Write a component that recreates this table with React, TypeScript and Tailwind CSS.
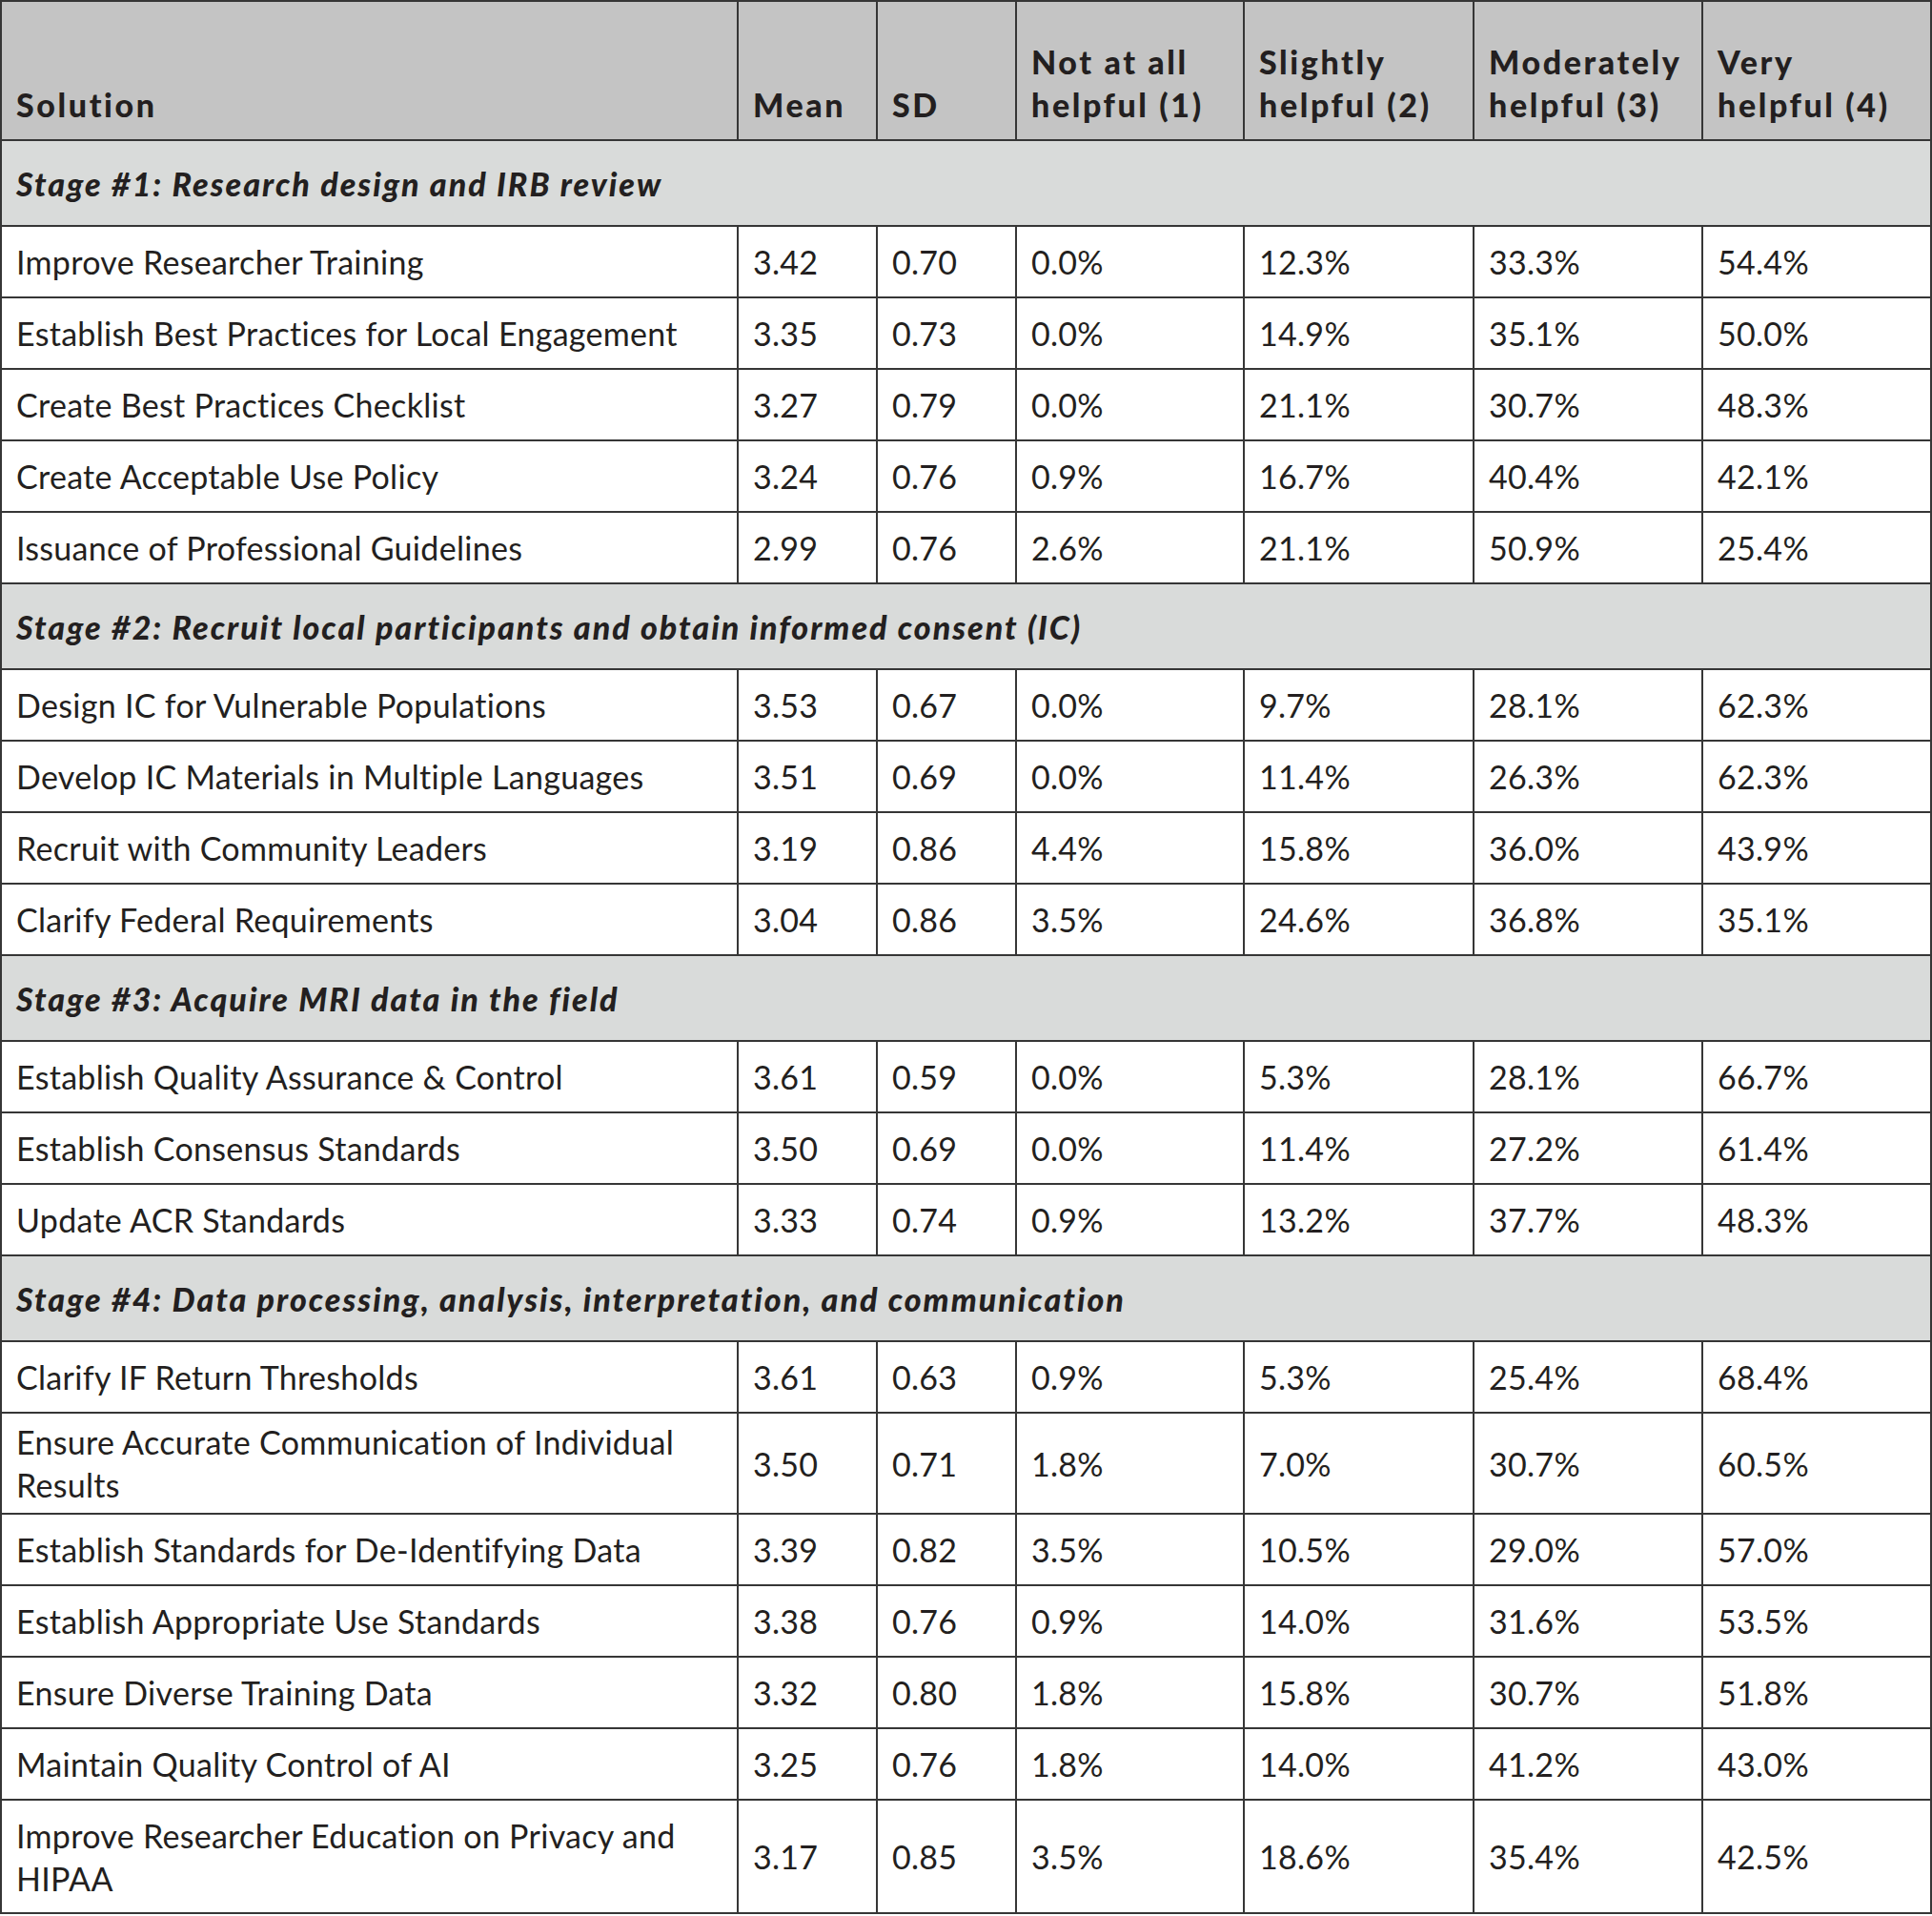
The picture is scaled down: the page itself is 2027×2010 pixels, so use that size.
import React from "react";

type Row = { name: string[]; v: string[]; h: string };
type Section = { title: string; rows: Row[] };

const R = "h-[73px]";
const R2 = "h-[104px]";
const R3 = "h-[117px]";

const sections: Section[] = [
  {
    title: "Stage #1: Research design and IRB review",
    rows: [
      { name: ["Improve Researcher Training"], v: ["3.42", "0.70", "0.0%", "12.3%", "33.3%", "54.4%"], h: R },
      { name: ["Establish Best Practices for Local Engagement"], v: ["3.35", "0.73", "0.0%", "14.9%", "35.1%", "50.0%"], h: R },
      { name: ["Create Best Practices Checklist"], v: ["3.27", "0.79", "0.0%", "21.1%", "30.7%", "48.3%"], h: R },
      { name: ["Create Acceptable Use Policy"], v: ["3.24", "0.76", "0.9%", "16.7%", "40.4%", "42.1%"], h: R },
      { name: ["Issuance of Professional Guidelines"], v: ["2.99", "0.76", "2.6%", "21.1%", "50.9%", "25.4%"], h: R },
    ],
  },
  {
    title: "Stage #2: Recruit local participants and obtain informed consent (IC)",
    rows: [
      { name: ["Design IC for Vulnerable Populations"], v: ["3.53", "0.67", "0.0%", "9.7%", "28.1%", "62.3%"], h: R },
      { name: ["Develop IC Materials in Multiple Languages"], v: ["3.51", "0.69", "0.0%", "11.4%", "26.3%", "62.3%"], h: R },
      { name: ["Recruit with Community Leaders"], v: ["3.19", "0.86", "4.4%", "15.8%", "36.0%", "43.9%"], h: R },
      { name: ["Clarify Federal Requirements"], v: ["3.04", "0.86", "3.5%", "24.6%", "36.8%", "35.1%"], h: R },
    ],
  },
  {
    title: "Stage #3: Acquire MRI data in the field",
    rows: [
      { name: ["Establish Quality Assurance & Control"], v: ["3.61", "0.59", "0.0%", "5.3%", "28.1%", "66.7%"], h: R },
      { name: ["Establish Consensus Standards"], v: ["3.50", "0.69", "0.0%", "11.4%", "27.2%", "61.4%"], h: R },
      { name: ["Update ACR Standards"], v: ["3.33", "0.74", "0.9%", "13.2%", "37.7%", "48.3%"], h: R },
    ],
  },
  {
    title: "Stage #4: Data processing, analysis, interpretation, and communication",
    rows: [
      { name: ["Clarify IF Return Thresholds"], v: ["3.61", "0.63", "0.9%", "5.3%", "25.4%", "68.4%"], h: R },
      { name: ["Ensure Accurate Communication of Individual", "Results"], v: ["3.50", "0.71", "1.8%", "7.0%", "30.7%", "60.5%"], h: R2 },
      { name: ["Establish Standards for De-Identifying Data"], v: ["3.39", "0.82", "3.5%", "10.5%", "29.0%", "57.0%"], h: R },
      { name: ["Establish Appropriate Use Standards"], v: ["3.38", "0.76", "0.9%", "14.0%", "31.6%", "53.5%"], h: R },
      { name: ["Ensure Diverse Training Data"], v: ["3.32", "0.80", "1.8%", "15.8%", "30.7%", "51.8%"], h: R },
      { name: ["Maintain Quality Control of AI"], v: ["3.25", "0.76", "1.8%", "14.0%", "41.2%", "43.0%"], h: R },
      { name: ["Improve Researcher Education on Privacy and", "HIPAA"], v: ["3.17", "0.85", "3.5%", "18.6%", "35.4%", "42.5%"], h: R3 },
    ],
  },
];

const headers: string[][] = [
  ["Solution"],
  ["Mean"],
  ["SD"],
  ["Not at all", "helpful (1)"],
  ["Slightly", "helpful (2)"],
  ["Moderately", "helpful (3)"],
  ["Very", "helpful (4)"],
];

export default function App() {
  return (
    <div className="w-[2027px] bg-white text-[#231f20] font-['Lato',sans-serif] text-[34px] leading-[45px] tracking-[0.3px]">
      <div className="grid grid-cols-[771px_144px_144px_237px_239px_238px_238px] gap-[2px] bg-[#363636] p-[2px]">
        {headers.map((h, i) => (
          <div key={i} className="h-[144px] bg-[#c4c4c4] px-[15px] pb-[14px] flex flex-col justify-end font-black tracking-[2.6px] whitespace-nowrap">
            {h.map((l, j) => (
              <div key={j}>{l}</div>
            ))}
          </div>
        ))}
        {sections.map((s, si) => (
          <React.Fragment key={si}>
            <div className="col-span-7 h-[88px] bg-[#d9dbda] px-[15px] flex items-center font-black italic tracking-[2px] whitespace-nowrap">
              {s.title}
            </div>
            {s.rows.map((r, ri) => (
              <React.Fragment key={ri}>
                <div className={`${r.h} bg-white px-[15px] flex flex-col justify-center`}>
                  {r.name.map((l, j) => (
                    <div key={j} className="whitespace-nowrap">{l}</div>
                  ))}
                </div>
                {r.v.map((v, vi) => (
                  <div key={vi} className={`${r.h} bg-white px-[15px] flex items-center`}>
                    {v}
                  </div>
                ))}
              </React.Fragment>
            ))}
          </React.Fragment>
        ))}
      </div>
    </div>
  );
}
